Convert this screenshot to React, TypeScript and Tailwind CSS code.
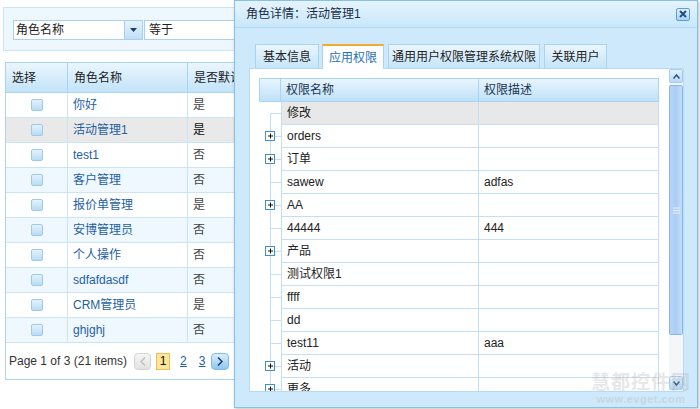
import React from "react";

const roles = [
  { name: "你好", def: "是" },
  { name: "活动管理1", def: "是", selected: true },
  { name: "test1", def: "否" },
  { name: "客户管理", def: "否" },
  { name: "报价单管理", def: "是" },
  { name: "安博管理员", def: "否" },
  { name: "个人操作", def: "否" },
  { name: "sdfafdasdf", def: "否" },
  { name: "CRM管理员", def: "是" },
  { name: "ghjghj", def: "否" },
];

const perms = [
  { name: "修改", desc: "", plus: false, selected: true },
  { name: "orders", desc: "", plus: true },
  { name: "订单", desc: "", plus: true },
  { name: "sawew", desc: "adfas", plus: false },
  { name: "AA", desc: "", plus: true },
  { name: "44444", desc: "444", plus: false },
  { name: "产品", desc: "", plus: true },
  { name: "测试权限1", desc: "", plus: false },
  { name: "ffff", desc: "", plus: false },
  { name: "dd", desc: "", plus: false },
  { name: "test11", desc: "aaa", plus: false },
  { name: "活动", desc: "", plus: true },
  { name: "更多", desc: "", plus: true },
];

const tabs = [
  { label: "基本信息", w: "w-[64px]" },
  { label: "应用权限", w: "w-[62px]", active: true },
  { label: "通用用户权限管理系统权限", w: "w-[152px]" },
  { label: "关联用户", w: "w-[63px]" },
];

const Checkbox = () => (
  <div className="w-[12px] h-[12px] rounded-[2px] border border-[#9ccbea] bg-gradient-to-b from-[#e4f2fc] to-[#b9dcf4]" />
);

const TreeCell = ({ first, plus }: { first: boolean; plus: boolean }) => (
  <svg width="22" height="23" className="block shrink-0">
    <line x1="11.5" y1={first ? 11.5 : 0} x2="11.5" y2="23" stroke="#c4dff3" />
    <line x1="11.5" y1="11.5" x2="22" y2="11.5" stroke="#c4dff3" />
    {plus && (
      <g>
        <rect x="6.5" y="6.5" width="9" height="9" fill="#fff" stroke="#3d8fc9" />
        <line x1="9" y1="11" x2="14" y2="11" stroke="#111" />
        <line x1="11.5" y1="8.5" x2="11.5" y2="13.5" stroke="#111" />
      </g>
    )}
  </svg>
);

export default function App() {
  return (
    <div className="relative w-[700px] h-[409px] overflow-hidden bg-white text-[12px] text-[#222] font-['Liberation_Sans','Noto_Sans_CJK_SC',sans-serif]">
      {/* left list page */}
      <div className="w-[330px] pt-[7px] pl-[3px]">
        <div className="h-[44px] border border-[#c8e4f6] bg-[#eef7fd] flex items-center pl-[9px] pt-[2px]">
          <div className="flex h-[20px] w-[130px] border border-[#a7d1ef] bg-white">
            <span className="flex-1 pl-[2px] leading-[18px]">角色名称</span>
            <div className="w-[18px] h-full border-l border-[#a7d1ef] bg-gradient-to-b from-[#e6f3fd] to-[#bfdff6] flex items-center justify-center">
              <svg width="7" height="4"><path d="M0 0h7L3.5 4z" fill="#1d3f66" /></svg>
            </div>
          </div>
          <div className="ml-[1px] flex-1 h-[20px] border border-[#a7d1ef] bg-white pl-[4px] leading-[18px]">等于</div>
        </div>

        <div className="mt-[11px] ml-[2px] border border-[#a9d5f2]">
          <div className="flex h-[30px] items-center bg-gradient-to-b from-[#eaf6fe] to-[#c2e3f8] border-b border-[#a9d5f2]">
            <div className="w-[62px] h-full pl-[6px] flex items-center border-r border-[#a9d5f2]">选择</div>
            <div className="w-[120px] h-full pl-[6px] flex items-center border-r border-[#a9d5f2]">角色名称</div>
            <div className="flex-1 pl-[6px]">是否默认</div>
          </div>
          {roles.map((r, i) => (
            <div
              key={r.name}
              className={`flex h-[25px] items-center border-b border-[#c9e5f7] ${
                r.selected ? "bg-[#e9e9e9]" : i % 2 === 1 ? "bg-[#eef8fe]" : "bg-white"
              }`}
            >
              <div className="w-[62px] h-full flex items-center justify-center border-r border-[#c9e5f7]">
                <Checkbox />
              </div>
              <div className="w-[120px] h-full pl-[5px] flex items-center border-r border-[#c9e5f7] text-[#1d60a3]">
                {r.name}
              </div>
              <div className={`flex-1 pl-[5px] ${r.selected ? "text-[#111]" : "text-[#444]"}`}>{r.def}</div>
            </div>
          ))}
          <div className="h-[36px] flex items-center pl-[3px] text-[#333]">
            <span>Page 1 of 3 (21 items)</span>
            <div className="ml-[7px] w-[17px] h-[17px] rounded-[4px] border border-[#d4d4d4] bg-gradient-to-b from-[#f6f6f6] to-[#e2e2e2] flex items-center justify-center">
              <svg width="6" height="9"><path d="M5 0.5L1 4.5l4 4" fill="none" stroke="#bdbdbd" strokeWidth="1.3" /></svg>
            </div>
            <div className="ml-[5px] w-[14px] h-[17px] border border-[#f0bf52] bg-[#fde59b] flex items-center justify-center text-[#111]">1</div>
            <span className="ml-[10px] text-[#1d60a3] underline">2</span>
            <span className="ml-[12px] text-[#1d60a3] underline">3</span>
            <div className="ml-[6px] w-[18px] h-[17px] rounded-[4px] border border-[#7fbbe6] bg-gradient-to-b from-[#d9eefd] to-[#8fc7f0] flex items-center justify-center">
              <svg width="6" height="9"><path d="M1 0.5l4 4-4 4" fill="none" stroke="#173c66" strokeWidth="1.5" /></svg>
            </div>
          </div>
        </div>
      </div>

      {/* dialog */}
      <div className="absolute left-[234px] top-0 w-[464px] h-[408px] border border-[#86c1ea] bg-[#cde9fb] shadow-[1px_1px_3px_rgba(0,0,0,0.25)] flex flex-col">
        <div className="h-[27px] shrink-0 flex items-center justify-between pl-[11px] pr-[7px] bg-gradient-to-b from-[#e6f4fe] to-[#c9e7fb] border-b border-[#b0d9f4]">
          <span className="text-[#1a2d45]">角色详情：活动管理1</span>
          <div className="w-[14px] h-[13px] rounded-[2px] border border-[#5b9fd6] bg-gradient-to-b from-[#e2f1fd] to-[#a7d2f3] flex items-center justify-center">
            <svg width="8" height="8"><path d="M1 1l6 6M7 1L1 7" stroke="#1b4f86" strokeWidth="2" /></svg>
          </div>
        </div>

        <div className="pt-[15px] pl-[19px] flex gap-[3px] items-end h-[40px] shrink-0">
          {tabs.map((t) =>
            t.active ? (
              <div
                key={t.label}
                className={`${t.w} h-[25px] -mb-[1px] relative z-10 bg-white border-x border-[#a9d4f1] border-t-2 border-t-[#f5a92e] flex items-center justify-center text-[#1f6fb4]`}
              >
                {t.label}
              </div>
            ) : (
              <div
                key={t.label}
                className={`${t.w} h-[24px] border border-[#a9d4f1] border-b-0 bg-gradient-to-b from-[#eaf6fe] to-[#c5e4f9] flex items-center justify-center text-[#222] ml-[1px]`}
              >
                {t.label}
              </div>
            )
          )}
        </div>

        <div className="ml-[14px] mr-[13px] h-[324px] bg-white border border-[#b3dbf4] flex overflow-hidden">
          <div className="flex-1 pt-[9px] pl-[9px] pr-[10px] overflow-hidden">
            <div className="flex h-[24px] border border-[#a9d5f2] bg-gradient-to-b from-[#e8f5fe] to-[#bfe1f8]">
              <div className="w-[21px] border-r border-[#a9d5f2]" />
              <div className="w-[198px] pl-[5px] flex items-center border-r border-[#a9d5f2] text-[#1a3550]">权限名称</div>
              <div className="flex-1 pl-[5px] flex items-center text-[#1a3550]">权限描述</div>
            </div>
            {perms.map((p, i) => (
              <div key={p.name} className="flex h-[23px]">
                <TreeCell first={i === 0} plus={p.plus} />
                <div
                  className={`flex-1 flex border-b border-r border-[#c4dff3] ${p.selected ? "bg-[#e8e8e8]" : "bg-white"}`}
                >
                  <div className="w-[198px] pl-[5px] flex items-center border-l border-r border-[#c4dff3]">{p.name}</div>
                  <div className="flex-1 pl-[5px] flex items-center">{p.desc}</div>
                </div>
              </div>
            ))}
          </div>

          {/* scrollbar */}
          <div className="w-[14px] shrink-0 flex flex-col bg-[#f5f6f7]">
            <div className="h-[14px] rounded-[2px] border border-[#a6cdef] bg-gradient-to-b from-[#e3f1fd] to-[#b8d8f6] flex items-center justify-center">
              <svg width="7" height="5"><path d="M0.5 4.5L3.5 1l3 3.5" fill="none" stroke="#27507c" strokeWidth="1.5" /></svg>
            </div>
            <div className="mt-[2px] h-[250px] rounded-[2px] border border-[#87b8ea] bg-gradient-to-r from-[#b7d5f8] via-[#a9ccf6] to-[#c6def9] flex items-center justify-center">
              <svg width="7" height="7"><path d="M0 1h7M0 3.5h7M0 6h7" stroke="#e8f2fd" /></svg>
            </div>
            <div className="flex-1" />
            <div className="h-[14px] mb-[1px] rounded-[2px] border border-[#a6cdef] bg-gradient-to-b from-[#e3f1fd] to-[#b8d8f6] flex items-center justify-center">
              <svg width="7" height="5"><path d="M0.5 0.5l3 3.5 3-3.5" fill="none" stroke="#27507c" strokeWidth="1.5" /></svg>
            </div>
          </div>
        </div>
      </div>

      {/* watermark */}
      <div className="absolute left-[590px] top-[373px] w-[102px] flex flex-col items-center text-[rgba(170,170,170,0.3)] pointer-events-none">
        <span className="text-[19px] leading-[20px] font-bold tracking-[1px]">慧都控件网</span>
        <span className="text-[11px] leading-[12px] font-bold tracking-[0.5px]">www.evget.com</span>
      </div>
    </div>
  );
}
